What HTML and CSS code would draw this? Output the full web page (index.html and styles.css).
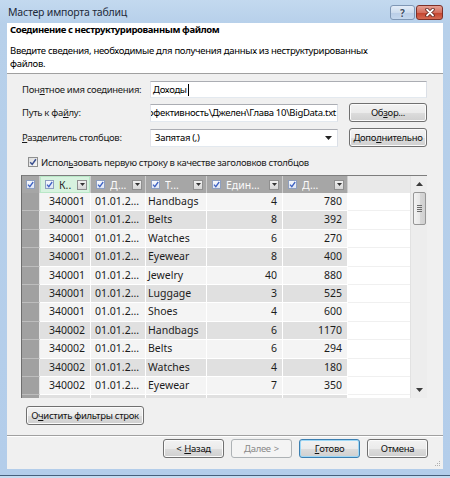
FILE: index.html
```html
<!DOCTYPE html>
<html lang="ru">
<head>
<meta charset="utf-8">
<title>Мастер импорта таблиц</title>
<link rel="stylesheet" href="styles.css">
</head>
<body>
<div class="window">
  <div class="titlebar">
    <div class="title">Мастер импорта таблиц</div>
    <div class="caption">
      <div class="cap-btn help">?</div>
      <div class="cap-btn close"><svg width="12" height="9" viewBox="0 0 12 9"><path d="M3 1.5 L9 7.5 M9 1.5 L3 7.5" stroke="#5a1d16" stroke-width="3.4" stroke-linecap="round"/><path d="M3 1.5 L9 7.5 M9 1.5 L3 7.5" stroke="#ffffff" stroke-width="1.8" stroke-linecap="round"/></svg></div>
    </div>
  </div>
  <div class="client">
    <div class="banner">
      <div class="banner-title">Соединение с неструктурированным файлом</div>
      <div class="banner-desc">Введите сведения, необходимые для получения данных из неструктурированных<br>файлов.</div>
    </div>
    <div class="body">
      <div class="frow r1">
        <div class="lbl">Пон<u>я</u>тное имя соединения:</div>
        <div class="input wide">Доходы<span class="caret"></span></div>
      </div>
      <div class="frow r2">
        <div class="lbl">Путь к фа<u>й</u>лу:</div>
        <div class="input path"><span>ффективность\Джелен\Глава 10\BigData.txt</span></div>
        <div class="btn side">Об<u>з</u>ор...</div>
      </div>
      <div class="frow r3">
        <div class="lbl"><u>Р</u>азделитель столбцов:</div>
        <div class="input combo"><span class="ctext">Запятая (,)</span><svg class="carr" width="7" height="4" viewBox="0 0 7 4"><path d="M0 0 H7 L3.5 4 Z" fill="#222"/></svg></div>
        <div class="btn side">Допо<u>л</u>нительно</div>
      </div>
      <div class="check-row">
        <span class="cb"><svg width="8" height="8" viewBox="0 0 8 8"><path d="M1.2 4.2 L3.2 6.4 L6.9 1.2" fill="none" stroke="#3a4f8f" stroke-width="1.5"/></svg></span>
        <span>Испол<u>ь</u>зовать первую строку в качестве заголовков столбцов</span>
      </div>
      <div class="grid">
        <div class="gd">
          <div class="hc hsel"><span class="hcb"><svg width="7" height="7" viewBox="0 0 7 7"><path d="M1 3.6 L2.8 5.6 L6.2 1" fill="none" stroke="#3d62c4" stroke-width="1.3"/></svg></span></div>
          <div class="hc on"><span class="hcb"><svg width="7" height="7" viewBox="0 0 7 7"><path d="M1 3.6 L2.8 5.6 L6.2 1" fill="none" stroke="#3d62c4" stroke-width="1.3"/></svg></span><span class="ht">К..</span><span class="dd"><svg width="5" height="3" viewBox="0 0 5 3"><path d="M0 0 H5 L2.5 3 Z" fill="#333"/></svg></span></div>
          <div class="hc"><span class="hcb"><svg width="7" height="7" viewBox="0 0 7 7"><path d="M1 3.6 L2.8 5.6 L6.2 1" fill="none" stroke="#3d62c4" stroke-width="1.3"/></svg></span><span class="ht">Д...</span><span class="dd"><svg width="5" height="3" viewBox="0 0 5 3"><path d="M0 0 H5 L2.5 3 Z" fill="#333"/></svg></span></div>
          <div class="hc"><span class="hcb"><svg width="7" height="7" viewBox="0 0 7 7"><path d="M1 3.6 L2.8 5.6 L6.2 1" fill="none" stroke="#3d62c4" stroke-width="1.3"/></svg></span><span class="ht">Т...</span><span class="dd"><svg width="5" height="3" viewBox="0 0 5 3"><path d="M0 0 H5 L2.5 3 Z" fill="#333"/></svg></span></div>
          <div class="hc"><span class="hcb"><svg width="7" height="7" viewBox="0 0 7 7"><path d="M1 3.6 L2.8 5.6 L6.2 1" fill="none" stroke="#3d62c4" stroke-width="1.3"/></svg></span><span class="ht">Един...</span><span class="dd"><svg width="5" height="3" viewBox="0 0 5 3"><path d="M0 0 H5 L2.5 3 Z" fill="#333"/></svg></span></div>
          <div class="hc"><span class="hcb"><svg width="7" height="7" viewBox="0 0 7 7"><path d="M1 3.6 L2.8 5.6 L6.2 1" fill="none" stroke="#3d62c4" stroke-width="1.3"/></svg></span><span class="ht">Д...</span><span class="dd"><svg width="5" height="3" viewBox="0 0 5 3"><path d="M0 0 H5 L2.5 3 Z" fill="#333"/></svg></span></div>
          <div class="hc hfill"></div>

          <div class="row o"><div class="sel"></div><div class="c num">340001</div><div class="c dt">01.01.2...</div><div class="c tx">Handbags</div><div class="c num">4</div><div class="c num">780</div><div class="fill"></div></div>
          <div class="row e"><div class="sel"></div><div class="c num">340001</div><div class="c dt">01.01.2...</div><div class="c tx">Belts</div><div class="c num">8</div><div class="c num">392</div><div class="fill"></div></div>
          <div class="row o"><div class="sel"></div><div class="c num">340001</div><div class="c dt">01.01.2...</div><div class="c tx">Watches</div><div class="c num">6</div><div class="c num">270</div><div class="fill"></div></div>
          <div class="row e"><div class="sel"></div><div class="c num">340001</div><div class="c dt">01.01.2...</div><div class="c tx">Eyewear</div><div class="c num">8</div><div class="c num">400</div><div class="fill"></div></div>
          <div class="row o"><div class="sel"></div><div class="c num">340001</div><div class="c dt">01.01.2...</div><div class="c tx">Jewelry</div><div class="c num">40</div><div class="c num">880</div><div class="fill"></div></div>
          <div class="row e"><div class="sel"></div><div class="c num">340001</div><div class="c dt">01.01.2...</div><div class="c tx">Luggage</div><div class="c num">3</div><div class="c num">525</div><div class="fill"></div></div>
          <div class="row o"><div class="sel"></div><div class="c num">340001</div><div class="c dt">01.01.2...</div><div class="c tx">Shoes</div><div class="c num">4</div><div class="c num">600</div><div class="fill"></div></div>
          <div class="row e"><div class="sel"></div><div class="c num">340002</div><div class="c dt">01.01.2...</div><div class="c tx">Handbags</div><div class="c num">6</div><div class="c num">1170</div><div class="fill"></div></div>
          <div class="row o"><div class="sel"></div><div class="c num">340002</div><div class="c dt">01.01.2...</div><div class="c tx">Belts</div><div class="c num">6</div><div class="c num">294</div><div class="fill"></div></div>
          <div class="row e"><div class="sel"></div><div class="c num">340002</div><div class="c dt">01.01.2...</div><div class="c tx">Watches</div><div class="c num">4</div><div class="c num">180</div><div class="fill"></div></div>
          <div class="row o"><div class="sel"></div><div class="c num">340002</div><div class="c dt">01.01.2...</div><div class="c tx">Eyewear</div><div class="c num">7</div><div class="c num">350</div><div class="fill"></div></div>
          <div class="row e"><div class="sel"></div><div class="c"></div><div class="c"></div><div class="c"></div><div class="c"></div><div class="c"></div><div class="fill"></div></div>
        </div>
        <div class="vscroll">
          <div class="sarrow"><svg width="7" height="4" viewBox="0 0 7 4"><path d="M0 4 H7 L3.5 0 Z" fill="#3c3c3c"/></svg></div>
          <div class="thumb"><span class="grip"></span></div>
          <div class="track"></div>
          <div class="sarrow"><svg width="7" height="4" viewBox="0 0 7 4"><path d="M0 0 H7 L3.5 4 Z" fill="#3c3c3c"/></svg></div>
        </div>
      </div>
      <div class="clear-row"><div class="btn clear">О<u>ч</u>истить фильтры строк</div></div>
    </div>
    <div class="footer">
      <div class="sep"></div>
      <div class="buttons">
        <div class="btn nav"><span class="arr">&lt;</span><u>Н</u>азад</div>
        <div class="btn nav disabled"><u>Д</u>алее<span class="arr r">&gt;</span></div>
        <div class="btn nav default"><u>Г</u>отово</div>
        <div class="btn nav">Отмена</div>
      </div>
    </div>
    <svg class="sizegrip" width="6" height="6" viewBox="0 0 6 6"><rect x="4" y="0" width="1" height="1" fill="#b0b0b0"/><rect x="2" y="2" width="1" height="1" fill="#b0b0b0"/><rect x="4" y="2" width="1" height="1" fill="#b0b0b0"/><rect x="0" y="4" width="1" height="1" fill="#b0b0b0"/><rect x="2" y="4" width="1" height="1" fill="#b0b0b0"/><rect x="4" y="4" width="1" height="1" fill="#b0b0b0"/></svg>
  </div>
</div>
</body>
</html>
```

FILE: styles.css
```css
* { box-sizing: border-box; }
html, body { margin: 0; padding: 0; }
body {
  width: 450px;
  height: 478px;
  overflow: hidden;
  background: #c6dcf1;
  font-family: "Noto Sans", "Open Sans", sans-serif;
  font-size: 9.5px;
  letter-spacing: -0.3px;
  color: #000;
}
u { text-decoration: underline; text-underline-offset: 1px; }

.window {
  width: 450px;
  height: 476px;
  display: flex;
  flex-direction: column;
  padding: 0 7px 6px 7px;
  background: linear-gradient(180deg, #c3d9ef 0px, #b7d0ea 23px, #b3cdea 100%);
  border-bottom: 1px solid #46607c;
}

.titlebar {
  height: 23px;
  flex: none;
  display: flex;
  align-items: flex-start;
}
.title {
  padding: 5px 0 0 1px;
  font-size: 10.5px;
  letter-spacing: -0.2px;
  line-height: 15px;
  color: #1e2a3a;
}
.caption {
  margin-left: auto;
  margin-top: 5px;
  display: flex;
  gap: 1px;
}
.cap-btn {
  height: 15px;
  border-radius: 3px;
  display: flex;
  align-items: center;
  justify-content: center;
}
.cap-btn.help {
  width: 25px;
  border: 1px solid #7f97b5;
  background: linear-gradient(180deg, #e3edf8 0%, #cddcee 50%, #b9cde6 51%, #c4d7ee 100%);
  color: #3e4f66;
  font-size: 10px;
  font-weight: bold;
  letter-spacing: 0;
  text-shadow: 0 0 2px #fff;
}
.cap-btn.close {
  width: 27px;
  border: 1px solid #7d3028;
  background: linear-gradient(180deg, #e6a093 0%, #d46f5e 50%, #c2412c 51%, #d56a52 100%);
}

.client {
  flex: 1;
  position: relative;
  background: #f0f0f0;
  display: flex;
  flex-direction: column;
}

.banner {
  height: 51px;
  flex: none;
  background: #ffffff;
  border-bottom: 1px solid #a0a0a0;
  padding: 0 0 0 3px;
}
.banner-title {
  font-weight: bold;
  line-height: 13px;
  letter-spacing: -0.4px;
}
.banner-desc {
  margin-top: 8px;
  line-height: 13px;
}

.body {
  padding: 7px 16px 0 15px;
  display: flex;
  flex-direction: column;
}
.frow {
  display: flex;
  align-items: center;
}
.frow.r1 { height: 17px; }
.frow.r2 { height: 19px; margin-top: 5px; }
.frow.r3 { height: 19px; margin-top: 6px; }
.lbl {
  width: 128px;
  flex: none;
  color: #1a1a1a;
  white-space: nowrap;
}
.input {
  height: 17px;
  background: #fff;
  border: 1px solid #abadb3;
  border-left-color: #e2e3ea;
  border-right-color: #dbdfe6;
  border-bottom-color: #e3e9ef;
  display: flex;
  align-items: center;
  padding: 0 2px;
  white-space: nowrap;
  overflow: hidden;
}
.input.wide { flex: 1; }
.frow.r2 .input, .frow.r3 .input { width: 188px; height: 18px; }
.input.path { justify-content: flex-end; padding: 0 1px 0 0; }
.caret {
  display: inline-block;
  width: 1px;
  height: 12px;
  background: #000;
  margin-left: 1px;
}
.input.combo { padding: 0 5px 0 4px; }
.ctext { flex: 1; }
.carr { flex: none; }

.btn {
  height: 19px;
  border: 1px solid #707070;
  border-radius: 3px;
  background: linear-gradient(180deg, #f2f2f2 0%, #ebebeb 50%, #dddddd 51%, #cfcfcf 100%);
  box-shadow: inset 0 0 0 1px #fbfbfb;
  display: flex;
  align-items: center;
  justify-content: center;
  white-space: nowrap;
  color: #111;
}
.btn.side { width: 78px; margin-left: auto; }
.arr { margin-right: 3px; }
.arr.r { margin: 0 0 0 3px; }

.check-row {
  margin-top: 9px;
  height: 12px;
  display: flex;
  align-items: center;
  gap: 3px;
  padding-left: 6px;
  color: #1a1a1a;
}
.cb {
  width: 10px;
  height: 10px;
  border: 1px solid #8e8f8f;
  background: linear-gradient(135deg, #dcdcdc 0%, #f6f6f6 100%);
  display: flex;
  align-items: center;
  justify-content: center;
}

.grid {
  margin: 7px 0 0 -1px;
  height: 223px;
  display: flex;
  border-top: 1px solid #7d7d7d;
  border-left: 1px solid #6e6e6e;
  overflow: hidden;
  font-size: 10.5px;
  letter-spacing: 0;
  color: #1c1c1c;
}
.gd {
  flex: 1;
  display: grid;
  grid-template-columns: 18px 51px 55px 61px 76px 65px 1fr;
  grid-template-rows: 17px;
  grid-auto-rows: 18.4px;
  align-content: start;
  overflow: hidden;
}
.hc {
  background: #a6a6a6;
  color: #fbfbfb;
  border-right: 1px solid #cdcdcd;
  display: flex;
  align-items: center;
  padding: 0 3px 0 5px;
  white-space: nowrap;
  overflow: hidden;
}
.hc.hsel { padding: 0; justify-content: center; }
.hc.on {
  background: #d7f2df;
  color: #2a2a2a;
  box-shadow: inset 0 0 0 1px #b9e7c7;
}
.hc.hfill { background: #e9e9e9; border-right: none; }
.hcb {
  width: 9px;
  height: 9px;
  flex: none;
  border: 1px solid #8e9fbf;
  background: linear-gradient(180deg, #f7f9fd 0%, #dfe6f3 100%);
  display: flex;
  align-items: center;
  justify-content: center;
}
.ht { flex: 1; margin-left: 5px; overflow: hidden; }
.dd {
  width: 10px;
  height: 10px;
  flex: none;
  border: 1px solid #8f8f8f;
  background: linear-gradient(180deg, #f0f0f0 0%, #d6d6d6 100%);
  display: flex;
  align-items: center;
  justify-content: center;
}

.row { display: contents; }
.sel {
  background: #a1a1a1;
  border-bottom: 1px solid #bdbdbd;
  border-right: 1px solid #e6e6e6;
}
.c {
  border-right: 1px solid #ffffff;
  border-bottom: 1px solid #ffffff;
  line-height: 17px;
  white-space: nowrap;
  overflow: hidden;
}
.row.o .c { background: #f4f4f4; }
.row.e .c { background: #e0e0e0; }
.c.num { text-align: right; padding-right: 5px; }
.c.dt { padding-left: 4px; }
.c.tx { padding-left: 2px; }
.fill { background: #ffffff; border-bottom: 1px solid #f0f0f0; }

.vscroll {
  width: 17px;
  flex: none;
  background: #ededed;
  border-left: 1px solid #e2e2e2;
  display: flex;
  flex-direction: column;
}
.sarrow {
  height: 16px;
  flex: none;
  display: flex;
  align-items: center;
  justify-content: center;
}
.thumb {
  height: 33px;
  flex: none;
  margin: 0 1px 0 2px;
  border: 1px solid #979797;
  border-radius: 2px;
  background: linear-gradient(90deg, #f3f3f3 0%, #e8e8e8 50%, #d8d8d8 51%, #d0d0d0 100%);
  display: flex;
  align-items: center;
  justify-content: center;
}
.grip {
  width: 5px;
  height: 7px;
  background: repeating-linear-gradient(180deg, #6b6b6b 0 1px, transparent 1px 2px);
}
.track { flex: 1; }

.clear-row { margin-top: 8px; padding-left: 4px; display: flex; }
.btn.clear { width: 118px; }

.footer {
  margin-top: auto;
  padding: 0 15px 11px 0;
}
.sep {
  height: 2px;
  border-top: 1px solid #a0a0a0;
  border-bottom: 1px solid #ffffff;
  margin-right: -15px;
}
.buttons {
  margin-top: 2px;
  display: flex;
  justify-content: flex-end;
  gap: 7px;
}
.btn.nav { width: 61px; }
.btn.disabled {
  border-color: #adb2b5;
  background: #f4f4f4;
  box-shadow: none;
  color: #8a8a8a;
}
.btn.default {
  border-color: #3c7fb1;
  box-shadow: inset 0 0 0 1px #9fd8f6;
}
.sizegrip {
  position: absolute;
  right: 2px;
  bottom: 2px;
}
```
